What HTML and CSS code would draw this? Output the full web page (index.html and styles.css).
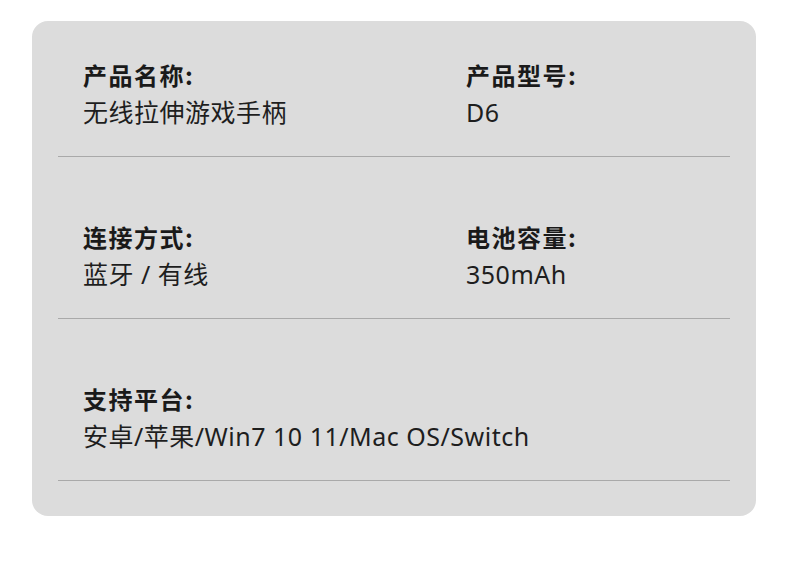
FILE: index.html
```html
<!DOCTYPE html>
<html lang="zh-CN">
<head>
<meta charset="utf-8">
<link rel="stylesheet" href="styles.css">
</head>
<body>
<div class="card">
  <div class="row">
    <div class="cell">
      <div class="label">产品名称:</div>
      <div class="value">无线拉伸游戏手柄</div>
    </div>
    <div class="cell">
      <div class="label">产品型号:</div>
      <div class="value">D6</div>
    </div>
  </div>
  <div class="row">
    <div class="cell">
      <div class="label">连接方式:</div>
      <div class="value">蓝牙 / 有线</div>
    </div>
    <div class="cell">
      <div class="label">电池容量:</div>
      <div class="value">350mAh</div>
    </div>
  </div>
  <div class="row">
    <div class="cell wide">
      <div class="label">支持平台:</div>
      <div class="value">安卓/苹果/Win7 10 11/Mac OS/Switch</div>
    </div>
  </div>
</div>
</body>
</html>
```
FILE: styles.css
```css
html, body {
  margin: 0;
  padding: 0;
  background: #ffffff;
}
body {
  font-family: "Noto Sans", "Noto Sans CJK SC", sans-serif;
  color: #1a1a1a;
}
.card {
  box-sizing: border-box;
  margin: 21px 0 0 32px;
  width: 724px;
  height: 495px;
  background: #dcdcdc;
  border-radius: 16px;
  padding: 36px 26px 0 26px;
}
.row {
  display: grid;
  grid-template-columns: 383px 1fr;
  padding: 0 25px 25px 25px;
  border-bottom: 1px solid #a9a9a9;
}
.row + .row {
  margin-top: 62px;
}
.cell.wide {
  grid-column: 1 / span 2;
}
.label {
  font-family: "Noto Sans CJK SC", sans-serif;
  font-weight: 700;
  font-size: 24px;
  letter-spacing: 1.5px;
  line-height: 36px;
  color: #1a1a1a;
}
.value {
  font-size: 25px;
  letter-spacing: 0.5px;
  line-height: 38px;
  color: #1e1e1e;
}
```
